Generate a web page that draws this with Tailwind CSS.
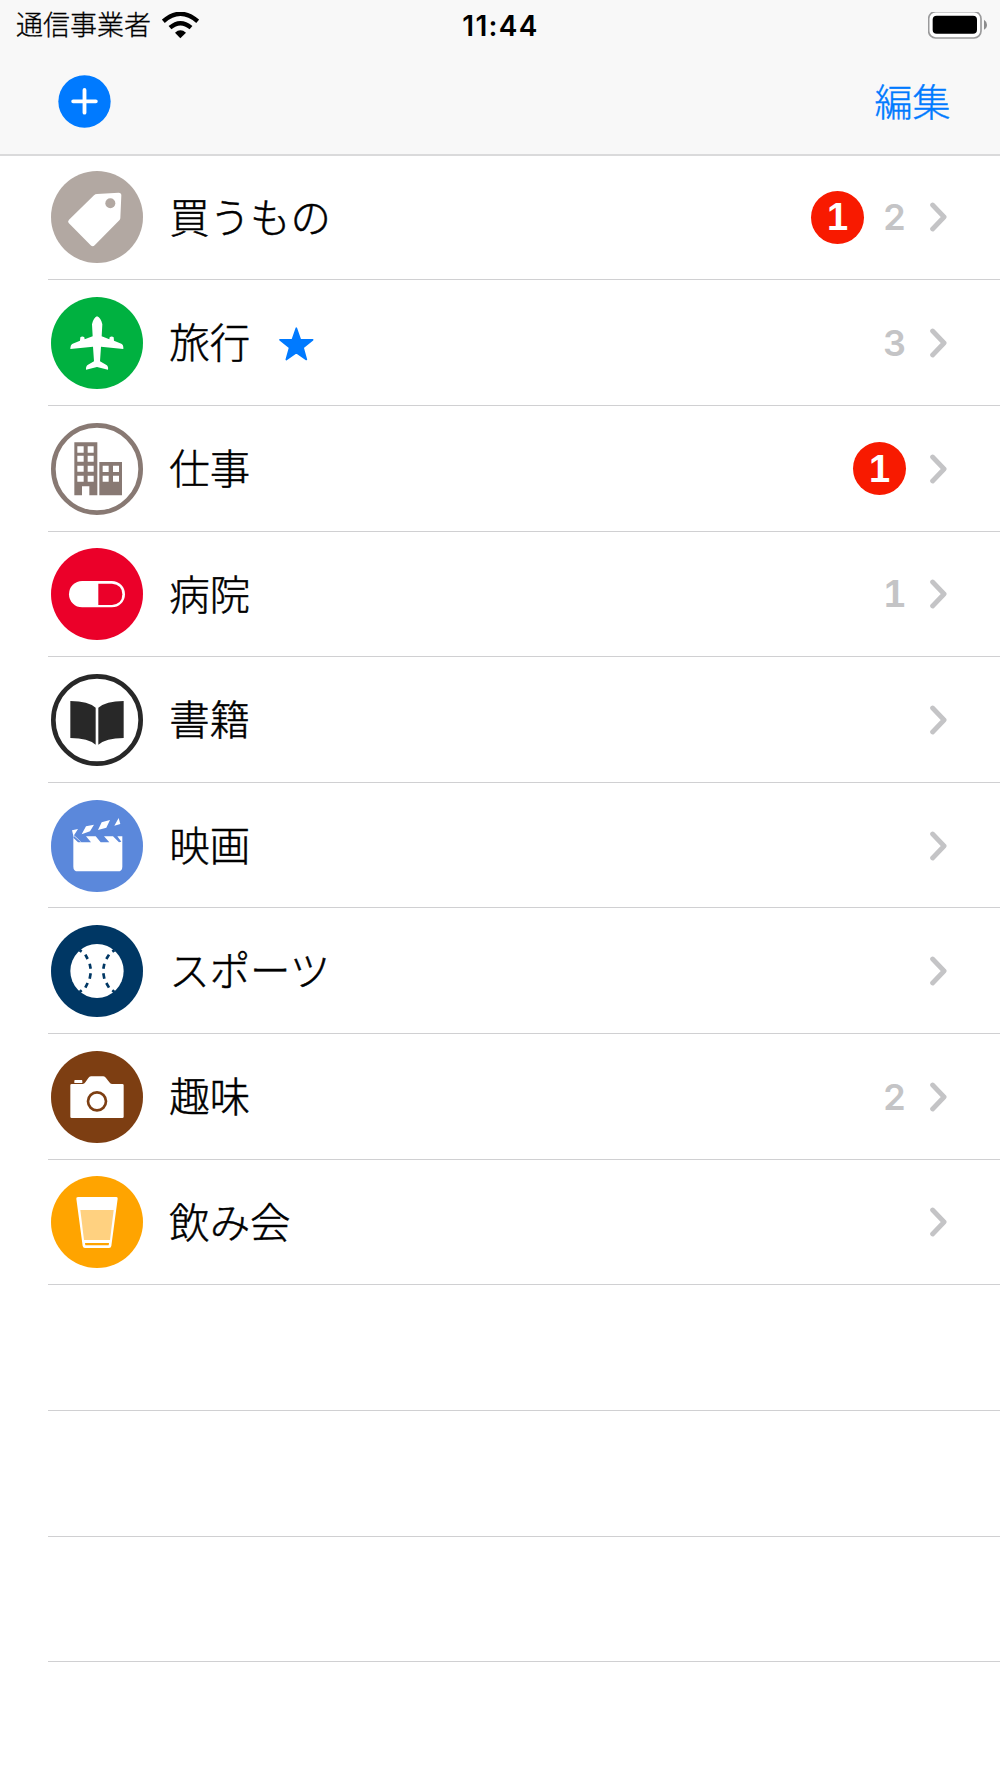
<!DOCTYPE html>
<html lang="ja">
<head>
<meta charset="utf-8">
<title>リスト</title>
<script src="https://cdn.jsdelivr.net/npm/@tailwindcss/browser@4"></script>
</head>
<body class="bg-white">
<svg class="hidden">
  <symbol id="chevron" viewBox="0 0 18 30"><path d="M2.600 3L14.100 15L2.600 27" fill="none" stroke="#c4c4c6" stroke-width="4.800" stroke-linecap="round" stroke-linejoin="round"/></symbol>
</svg>
<div class="flex h-[1778px] w-[1000px] flex-col overflow-hidden bg-white font-['Inter','Noto_Sans_CJK_JP',sans-serif] text-black">
  <header class="flex h-[156px] shrink-0 flex-col border-b-2 border-[#dadadb] bg-[#f8f8f8]">
    <div class="grid h-[50px] grid-cols-3 items-center pl-4 pr-[12px]">
      <div class="flex items-center gap-[11px]">
        <span class="pt-px text-[27px] font-light leading-[50px] [-webkit-text-stroke:0.3px]">通信事業者</span>
        <svg class="h-[28px] w-[37px]" viewBox="486 32 111 84"><g fill="none" stroke="#000" stroke-width="13"><path d="M490 60Q541 15 593 60"/><path d="M510 79Q541 52 573 79"/></g><path d="M525 94Q541 80 558 94L541 111Z"/></svg>
      </div>
      <div class="text-center text-[28px] font-semibold leading-[50px] tracking-[1.300px]"><span class="-ml-[3px]">11:44</span></div>
      <svg class="h-[28px] w-[60px] justify-self-end" viewBox="264 34 180 84"><rect x="266" y="33" width="157" height="79" rx="21" fill="#fff" stroke="#9a9a9b" stroke-width="5"/><rect x="278" y="45" width="133" height="54" rx="12"/><path d="M432 57Q441 63 441 72Q441 82 432 87Z" fill="#8c8c8d"/></svg>
    </div>
    <div class="flex h-[102px] items-center justify-between pl-[57.500px] pr-[49.500px]">
      <svg class="h-[53px] w-[53px]" viewBox="0 0 159 159"><circle cx="79.500" cy="79.500" r="78.500" fill="#007aff"/><path d="M79.500 45V113M45.500 79H113.500" stroke="#fff" stroke-width="11.500" stroke-linecap="round"/></svg>
      <span class="pt-px text-[38px] font-light leading-[100px] text-[#007aff] [-webkit-text-stroke:0.4px]">編集</span>
    </div>
  </header>

  <ul class="-mt-[1.350px] ml-[48px] text-[40.400px] font-light">
    <li class="flex h-[125.640px] items-center border-b border-[#d0d0d2] pl-[2.800px] pr-[52px] pt-[1px]">
      <svg class="h-[92px] w-[92px]" viewBox="32 34 276 276"><circle cx="170" cy="172" r="138" fill="#b2a8a2"/><path d="M170 103L235 99Q243 99 243 107L240 175Q240 179 237 182L163 257Q157 263 151 257L85 190Q81 185 86 180L161 107Q165 103 170 103Z" fill="#fff"/><circle cx="210" cy="131" r="15" fill="#b2a8a2"/></svg>
      <span class="ml-[26.500px] pt-[3px] [-webkit-text-stroke:0.5px]">買うもの</span>
      <div class="ml-auto flex items-center">
        <span class="mr-[19px] flex h-[53px] w-[53px] items-center justify-center rounded-full bg-[#f81a00] font-['Liberation_Sans',sans-serif] text-[38px] font-bold leading-none text-white">1</span>
        <span class="w-[23px] text-center text-[36px] font-semibold text-[#c4c4c6]">2</span>
        <svg class="ml-[24px] h-[30px] w-[18px]"><use href="#chevron"/></svg>
      </div>
    </li>
    <li class="flex h-[125.640px] items-center border-b border-[#d0d0d2] pl-[2.800px] pr-[52px] pt-[1px]">
      <svg class="h-[92px] w-[92px]" viewBox="32 36 276 276"><circle cx="170" cy="174" r="138" fill="#00b140"/><path d="M170 94C163 96 158 105 155 118L157 154L133 163L132 157Q126 152 120 157L119 167L97 176Q90 179 90 192L158 185L161 229L143 239Q136 243 137 254L170 246L203 254Q205 243 197 239L179 229L182 185L249 192Q250 179 243 176L221 167L220 157Q214 152 208 157L207 163L184 154L186 118C183 105 178 96 170 94Z" fill="#fff"/></svg>
      <span class="ml-[26.500px] pt-[3px] [-webkit-text-stroke:0.5px]">旅行</span>
      <svg class="ml-[28.500px] mt-[1px] h-[34px] w-[35px]" viewBox="716 125 105 101"><path d="M768 128L780 163H817L788 186L798 222L768 201L738 222L748 186L719 163H756Z" fill="#007aff" stroke="#007aff" stroke-width="5" stroke-linejoin="round"/></svg>
      <div class="ml-auto flex items-center">
        <span class="w-[23px] text-center text-[36px] font-semibold text-[#c4c4c6]">3</span>
        <svg class="ml-[24px] h-[30px] w-[18px]"><use href="#chevron"/></svg>
      </div>
    </li>
    <li class="flex h-[125.640px] items-center border-b border-[#d0d0d2] pl-[2.800px] pr-[52px] pt-[1px]">
      <svg class="h-[92px] w-[92px]" viewBox="32 38 276 276"><circle cx="170" cy="176" r="131" fill="#fff" stroke="#887973" stroke-width="14"/><path d="M102 96H171V255H147V228H125V255H102ZM177 155H245V255H177Z" fill="#887973"/><path d="M111 108h19v19h-19zM142 108h18v19h-18zM111 136h19v18h-19zM142 136h18v18h-18zM111 166h19v18h-19zM142 166h18v18h-18zM111 196h19v18h-19zM142 196h18v18h-18zM187 166h18v19h-18zM218 166h18v19h-18zM187 196h18v18h-18zM218 196h18v18h-18z" fill="#fff"/></svg>
      <span class="ml-[26.500px] pt-[3px] [-webkit-text-stroke:0.5px]">仕事</span>
      <div class="ml-auto flex items-center">
        <span class="flex h-[53px] w-[53px] items-center justify-center rounded-full bg-[#f81a00] font-['Liberation_Sans',sans-serif] text-[38px] font-bold leading-none text-white">1</span>
        <svg class="ml-[24px] h-[30px] w-[18px]"><use href="#chevron"/></svg>
      </div>
    </li>
    <li class="flex h-[125.640px] items-center border-b border-[#d0d0d2] pl-[2.800px] pr-[52px] pt-[1px]">
      <svg class="h-[92px] w-[92px]" viewBox="32 39 276 276"><circle cx="170" cy="177" r="138" fill="#eb0029"/><rect x="86" y="138" width="168" height="79" rx="39.500" fill="#fff"/><path d="M174 146H215Q246 149 246 178Q246 207 215 210H174Z" fill="#eb0029"/></svg>
      <span class="ml-[26.500px] pt-[3px] [-webkit-text-stroke:0.5px]">病院</span>
      <div class="ml-auto flex items-center">
        <span class="w-[23px] text-center font-['Liberation_Sans',sans-serif] text-[38px] font-bold leading-none text-[#c4c4c6]">1</span>
        <svg class="ml-[24px] h-[30px] w-[18px]"><use href="#chevron"/></svg>
      </div>
    </li>
    <li class="flex h-[125.640px] items-center border-b border-[#d0d0d2] pl-[2.800px] pr-[52px] pt-[1px]">
      <svg class="h-[92px] w-[92px]" viewBox="32 42 276 276"><circle cx="170" cy="180" r="131" fill="#fff" stroke="#282828" stroke-width="14"/><path d="M90 123Q145 124 166 143V254Q145 235 90 234ZM250 123Q196 124 174 143V254Q196 235 250 234Z" fill="#282828"/></svg>
      <span class="ml-[26.500px] pt-[3px] [-webkit-text-stroke:0.5px]">書籍</span>
      <svg class="ml-auto h-[30px] w-[18px]"><use href="#chevron"/></svg>
    </li>
    <li class="flex h-[125.640px] items-center border-b border-[#d0d0d2] pl-[2.800px] pr-[52px] pt-[1px]">
      <svg class="h-[92px] w-[92px]" viewBox="32 44 276 276"><circle cx="170" cy="182" r="138" fill="#5b88db"/><path d="M95 135L113 131L101 150L111 159L123 171H152L137 153H166L181 171H207L191 153H218L236 171L243 169L231 153H246V244Q246 258 232 258H113Q99 258 99 244V151ZM137 123L161 118L149 138L124 147ZM184 111L209 104L198 127L173 134ZM235 98L240 116L222 121Z" fill="#fff"/><path d="M101 152L122 171H113L99 157Z" fill="#5b88db"/></svg>
      <span class="ml-[26.500px] pt-[3px] [-webkit-text-stroke:0.5px]">映画</span>
      <svg class="ml-auto h-[30px] w-[18px]"><use href="#chevron"/></svg>
    </li>
    <li class="flex h-[125.640px] items-center border-b border-[#d0d0d2] pl-[2.800px] pr-[52px] pt-[1px]">
      <svg class="h-[92px] w-[92px]" viewBox="32 45 276 276"><circle cx="170" cy="183" r="138" fill="#003764"/><ellipse cx="170" cy="183" rx="80" ry="81" fill="#fff"/><g fill="none" stroke="#003764" stroke-width="8"><path d="M118 121L124 125M135 134L142 147M148 161L151 176M151 190L148 206M142 219L135 233M124 241L118 246M222 121L216 125M206 134L198 147M192 161L189 176M189 190L192 206M198 219L206 233M216 241L222 246"/></g></svg>
      <span class="ml-[26.500px] pt-[3px] [-webkit-text-stroke:0.5px]">スポーツ</span>
      <svg class="ml-auto h-[30px] w-[18px]"><use href="#chevron"/></svg>
    </li>
    <li class="flex h-[125.640px] items-center border-b border-[#d0d0d2] pl-[2.800px] pr-[52px] pt-[1px]">
      <svg class="h-[92px] w-[92px]" viewBox="32 422 276 276"><circle cx="170" cy="560" r="138" fill="#7d3e12"/><path d="M94 521H127Q132 521 135 516L144 503Q147 498 152 498H189Q194 498 197 503L207 516Q210 521 215 521H246Q250 521 250 525V619Q250 623 246 623H94Q90 623 90 619V525Q90 521 94 521ZM104 509H124Q126 509 126 512V518H102V512Q102 509 104 509Z" fill="#fff"/><circle cx="170" cy="573" r="27" fill="none" stroke="#7d3e12" stroke-width="8"/></svg>
      <span class="ml-[26.500px] pt-[3px] [-webkit-text-stroke:0.5px]">趣味</span>
      <div class="ml-auto flex items-center">
        <span class="w-[23px] text-center text-[36px] font-semibold text-[#c4c4c6]">2</span>
        <svg class="ml-[24px] h-[30px] w-[18px]"><use href="#chevron"/></svg>
      </div>
    </li>
    <li class="flex h-[125.640px] items-center border-b border-[#d0d0d2] pl-[2.800px] pr-[52px] pt-[1px]">
      <svg class="h-[92px] w-[92px]" viewBox="32 48 276 276"><circle cx="170" cy="186" r="138" fill="#ffa400"/><path d="M113 111H228Q233 111 232 116L213 258Q212 264 206 264H134Q128 264 127 258L108 116Q107 111 113 111Z" fill="#fff"/><path d="M120 150H220L209 240H131Z" fill="#ffd180"/><path d="M134 249H206L205 256H135Z" fill="#ffa400"/></svg>
      <span class="ml-[26.500px] pt-[3px] [-webkit-text-stroke:0.5px]">飲み会</span>
      <svg class="ml-auto h-[30px] w-[18px]"><use href="#chevron"/></svg>
    </li>
    <li class="h-[125.640px] border-b border-[#d0d0d2]"></li>
    <li class="h-[125.640px] border-b border-[#d0d0d2]"></li>
    <li class="h-[125.640px] border-b border-[#d0d0d2]"></li>
  </ul>
</div>
</body>
</html>
